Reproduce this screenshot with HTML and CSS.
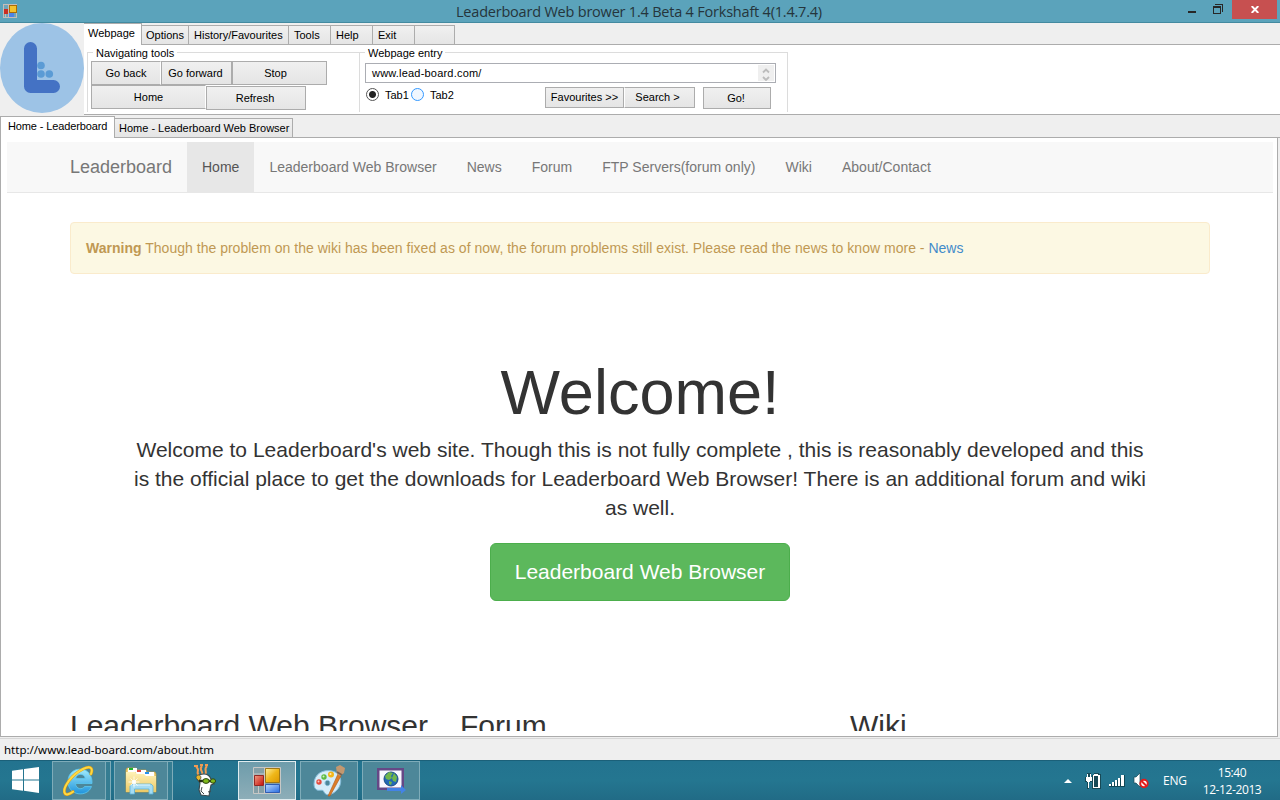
FILE: index.html
```html
<!DOCTYPE html>
<html lang="en">
<head>
<meta charset="utf-8">
<title>Leaderboard Web brower</title>
<link rel="stylesheet" href="styles.css">
</head>
<body>
<div class="desktop">
  <header class="titlebar">
    <svg class="app-icon" width="14" height="14" viewBox="0 0 14 14" shape-rendering="crispEdges"><path d="M.5.5h13v13H.5zM.5 5h5M5.5 0v14M5 8.500h9M2.500 10v4" fill="#6fa5b8" stroke="#c5bdb8"/><rect x="6" y="1" width="7" height="7" fill="#f3c22d" stroke="#a96d08"/><rect x="1" y="5" width="4" height="5" fill="#c92d22"/><rect x="6" y="9" width="5" height="4" fill="#4d83e8"/></svg>
    <span class="title"><span>Leaderboard Web brower 1.4 Beta 4 Forkshaft 4(1.4.7.4)</span></span>
    <div class="controls">
      <svg width="8" height="2"><path d="M0 0h8v2H0z" fill="#272727"/></svg>
      <svg width="10" height="10" shape-rendering="crispEdges"><path d="M2 0h8v8H9V1H2zM0 2h8v8H0zM1 4v5h6V4z" fill="#272727" fill-rule="evenodd"/></svg>
      <span class="close"><svg width="8" height="7" viewBox="0 0 8 7"><path d="M.7 0l6.600 7M7.300 0L.7 7" stroke="#fff" stroke-width="1.900"/></svg></span>
    </div>
  </header>

  <section class="tools">
    <svg class="logo" width="84" height="91" viewBox="0 0 84 91"><ellipse cx="42" cy="45" rx="42" ry="45" fill="#9dc3e6"/><path d="M30.500 25.500v38H53.500" fill="none" stroke="#4472c4" stroke-width="13" stroke-linecap="round" stroke-linejoin="round"/><g fill="#5b9bd5"><circle cx="41" cy="42.500" r="3.800"/><circle cx="41" cy="51" r="3.800"/><circle cx="49.300" cy="51" r="3.800"/></g></svg>
    <div class="tool-area">
      <nav class="menu-tabs">
        <span class="mtab on w57">Webpage</span><span class="mtab w48">Options</span><span class="mtab w100">History/Favourites</span><span class="mtab w42">Tools</span><span class="mtab w42">Help</span><span class="mtab w42">Exit</span><span class="mtab w40"></span>
      </nav>
      <div class="panel">
        <div class="group nav-group">
          <span class="legend">Navigating tools</span>
          <div class="row"><button class="b70">Go back</button><button class="b71">Go forward</button><button class="b95">Stop</button></div>
          <div class="row"><button class="b115">Home</button><button class="b100">Refresh</button></div>
        </div>
        <div class="group entry-group">
          <span class="legend">Webpage entry</span>
          <div class="entry"><span class="url">www.lead-board.com/</span><svg class="spin" width="16" height="16" viewBox="0 0 16 16"><path d="M0 0h16v16H0z" fill="#efefef"/><path d="M5 7.500l3-3 3 3M5 12l3 3 3-3" fill="none" stroke="#bcbcbc" stroke-width="1.800"/></svg></div>
          <div class="actions">
            <span class="radio checked"></span><span class="rlabel first">Tab1</span><span class="radio blue"></span><span class="rlabel">Tab2</span>
            <button class="fav">Favourites &gt;&gt;</button><button class="search">Search &gt;</button><button class="go">Go!</button>
          </div>
        </div>
      </div>
    </div>
  </section>

  <nav class="page-tabs"><span class="ptab on">Home - Leaderboard</span><span class="ptab">Home - Leaderboard Web Browser</span></nav>

  <main class="frame">
    <div class="viewport">
      <nav class="site-nav">
        <span class="brand">Leaderboard</span><span class="item active">Home</span><span class="item">Leaderboard Web Browser</span><span class="item">News</span><span class="item">Forum</span><span class="item">FTP Servers(forum only)</span><span class="item">Wiki</span><span class="item">About/Contact</span>
      </nav>
      <div class="container">
        <div class="alert"><b>Warning</b> Though the problem on the wiki has been fixed as of now, the forum problems still exist. Please read the news to know more - <span class="link">News</span></div>
        <section class="hero">
          <h1>Welcome!</h1>
          <p>Welcome to Leaderboard's web site. Though this is not fully complete , this is reasonably developed and this<br>is the official place to get the downloads for Leaderboard Web Browser! There is an additional forum and wiki<br>as well.</p>
          <span class="cta">Leaderboard Web Browser</span>
        </section>
        <section class="columns"><h2>Leaderboard Web Browser</h2><h2>Forum</h2><h2>Wiki</h2></section>
      </div>
    </div>
  </main>

  <div class="status"><span>http://www.lead-board.com/about.htm</span></div>

  <footer class="taskbar">
    <span class="start"><svg width="27" height="26" viewBox="0 0 27 26"><path d="M0 3.700l11-1.500V12.400H0zM12 2l15-2v12.400H12zM0 13.400h11v10.300L0 22.200zM12 13.400h15V26l-15-2.200z" fill="#fff"/></svg></span>
    <span class="task ie stack"><svg width="32" height="32" viewBox="0 0 32 32"><defs><linearGradient id="b" x2="0" y2="1"><stop stop-color="#a2ecfc"/><stop offset="1" stop-color="#1f93dc"/></linearGradient></defs><path d="M29 18.500H12.500c.5 6 7 6.500 9 3H28.500C24.500 33 4.500 31 5 16 5.500 0 30-.5 29 18.500zM12.700 13.500h9.500c-.5-5.500-8.800-5.500-9.500 0z" fill="url(#b)" fill-rule="evenodd" stroke="#5cc8f0" stroke-width=".8"/><path d="M28 9C30.500 2.500 27 .5 20 4 8 10 0 22.500 1.500 27.500c1 3.500 5.500 1.500 8.500-.8" fill="none" stroke="#d99a12" stroke-width="3" stroke-linecap="round"/><path d="M28 9C30.500 2.500 27 .5 20 4 8 10 0 22.500 1.500 27.500c1 3.500 5.500 1.500 8.500-.8" fill="none" stroke="#fdd943" stroke-width="2" stroke-linecap="round"/></svg></span>
    <span class="task explorer stack"><svg width="32" height="32" viewBox="0 0 32 32"><defs><linearGradient id="y" x2="0" y2="1"><stop stop-color="#fff2b8"/><stop offset="1" stop-color="#ecc965"/></linearGradient></defs><path d="M1 5l1-2h9l1 2h9l1 2h8l1 2v18H1z" fill="#eecf77" stroke="#c99d3a" stroke-width=".7"/><path d="M3 3h9v4H3zM11 5h10v4H11zM19 7h10v4H19z" fill="#fff"/><path d="M4 3h4v2H4z" fill="#20b529"/><path d="M12 5h4v2h-4z" fill="#dc483d"/><path d="M20 7h4v2h-4z" fill="#2592ed"/><path d="M1 7h9l2 2h7l2 2h10v16H1z" fill="url(#y)"/><path d="M5 29V21l2-2h19l2 2v8h-4v-5H9.500v5z" fill="#a6dcf3" stroke="#5ab2dc" stroke-width=".8"/><path d="M8 20h17" stroke="#e2f6ff"/><path d="M9 11.500v11M3.500 17h11M5.500 13.500l7 7M12.500 13.500l-7 7" stroke="#fff" stroke-width=".8"/><circle cx="9" cy="17" r="2" fill="#fff"/></svg></span>
    <span class="mascot"><svg width="24" height="33" viewBox="0 0 24 33"><path d="M1 2h4M7 1h3M12 1h3M3 3c5 3-1 5 3 8M9 2c-4 4 2 5 0 9M14 2c-4 4 1 5-2 9" fill="none" stroke="#f19b52" stroke-width="2"/><path d="M6 11c5-2 10-1 12 4l3 5-3 1-1 5-1 6-8-1-2-5 1-7-3-4z" fill="#fff" stroke="#39474c" stroke-width="1.100"/><path d="M3 14c0-4 5-4 5 0l-2 3z" fill="#e7b52c" stroke="#484832" stroke-width=".7"/><path d="M6 17h16" stroke="#263018" stroke-width="2.500"/><ellipse cx="13" cy="17" rx="3.200" ry="2.400" fill="#80b91b" stroke="#304716"/><ellipse cx="20" cy="17" rx="2.600" ry="2.200" fill="#80b91b" stroke="#304716"/><path d="M9 23l-1 4 3 3M15 28l3-1" fill="none" stroke="#42494b"/></svg></span>
    <span class="task current"><svg width="28" height="28" viewBox="0 0 28 28"><path d="M.5.500h27v26H.5zM0 7h12M11.500 0v27M0 18.500h28M5.500 19v8" fill="#849fa7" stroke="#c7c8c6"/><defs><linearGradient id="g" x2="1" y2="1"><stop stop-color="#fff0a1"/><stop offset=".5" stop-color="#efb719"/><stop offset="1" stop-color="#dc9700"/></linearGradient><linearGradient id="r" x2="1" y2="1"><stop stop-color="#ef9d83"/><stop offset="1" stop-color="#c60d08"/></linearGradient><linearGradient id="u" x2="1" y2="1"><stop stop-color="#b8d8ff"/><stop offset="1" stop-color="#286ce0"/></linearGradient></defs><path d="M12.500 1.500h14v14h-14z" fill="url(#g)" stroke="#9f7816"/><path d="M1.500 8.500h9v10h-9z" fill="url(#r)" stroke="#942724"/><path d="M12.500 17.500h14v8h-14z" fill="url(#u)" stroke="#305cb0"/></svg></span>
    <span class="task"><svg width="32" height="32" viewBox="0 0 32 32"><path d="M1 19C1 9 10 4 19 6c10 2 11 13 5 19-6 6-11 6-13 2-1-3-4-1-7-2-2-1-3-3-3-6zm11-1c0 3.500 5 3.500 5 0s-5-3.500-5 0z" fill="#d6edf9" fill-rule="evenodd" stroke="#85bddb"/><circle cx="6" cy="17" r="2.700" fill="#e54b3d"/><circle cx="11" cy="12" r="2.700" fill="#5ebc43"/><circle cx="18" cy="9.500" r="3" fill="#f3b619"/><g fill="#fff" opacity=".7"><circle cx="5.500" cy="16.500" r="1"/><circle cx="10.500" cy="11.500" r="1"/><circle cx="17.500" cy="9" r="1"/></g><path d="M25 9l3 2-11 20h-2z" fill="#dc7d29" stroke="#af591b" stroke-width=".6"/><path d="M24 9l-1-7 4-2 5 3-1 5-4 3z" fill="#c39870"/><path d="M24 7l5 3" stroke="#776354" stroke-width="2"/></svg></span>
    <span class="task"><svg width="32" height="32" viewBox="0 0 32 32"><path d="M2 3h27v22H2z" fill="#654886"/><path d="M4.500 5.500h22v17h-22z" fill="#f8f8ff"/><circle cx="16" cy="14" r="7" fill="#2368b5" stroke="#184b82"/><path d="M10 11l4-4 4 1-2 3 1 2-3 2-3-1zM19 8l3 4-1 5-3-1-1-3zM14 16l3 1-1 3-2-1z" fill="#70b64c"/><path d="M12 23h14v-3l5 5-5 4v-3H12z" fill="#4383e6"/></svg></span>
    <div class="tray">
      <svg class="arrow" width="8" height="4"><path d="M0 4l4-4 4 4z" fill="#fff"/></svg>
      <svg class="power" width="16" height="16" viewBox="0 0 16 16" shape-rendering="crispEdges"><path d="M0 4h2V0h4v4h1V2h2V0h5v1h2v15H7V9H4v7H2V9H0z" fill="#174956"/><path d="M2 1h1v3h2V1h1v3h1v4H5v1H4v6H3V9H2V8H1V4h1zM9 1h4v1h2v13H8V2h1zM9 3v11h4V3z" fill="#fff" fill-rule="evenodd"/></svg>
      <svg class="signal" width="16" height="12" viewBox="0 0 16 12" shape-rendering="crispEdges"><path d="M0 9h3v3H0zM3 7h3v5H3zM6 5h3v7H6zM9 3h3v9H9zM12 0h4v12h-4z" fill="#124754"/><path d="M0 9h2v2H0zM3 7h2v4H3zM6 5h2v6H6zM9 3h2v8H9zM12 0h3v11h-3z" fill="#fff"/></svg>
      <svg class="sound" width="16" height="16" viewBox="0 0 16 16"><path d="M1 4h2l4-4v14l-4-4H1z" fill="#fff" stroke="#174956" stroke-width=".7"/><circle cx="11" cy="10.500" r="3.700" fill="#fff" stroke="#e21c1c" stroke-width="1.900"/><path d="M8.500 8l5 5" stroke="#e21c1c" stroke-width="1.900"/></svg>
      <span class="lang">ENG</span>
      <span class="clock"><span>15:40</span><span class="date">12-12-2013</span></span>
    </div>
  </footer>
</div>
</body>
</html>
```
FILE: styles.css
```css
* { box-sizing: border-box; }
body { margin: 0; }
.desktop { width: 1280px; height: 800px; overflow: hidden; display: flex; flex-direction: column; background: #efefef; color: #000; font: 11px/13px "Liberation Sans", Arial, sans-serif; white-space: nowrap; }
svg { display: block; flex: none; }

.titlebar { height: 23px; flex: none; display: flex; background: #5ba3bb; border-bottom: 1px solid #438aa0; }
.app-icon { margin: 4px 0 0 3px; }
.title { flex: 1; padding-left: 439px; font: 14.500px/23px "Open Sans", sans-serif; color: #25353c; letter-spacing: -.21px; }
.controls { display: flex; }
.controls > svg:first-child { margin: 11px 17px 0 0; }
.controls > svg:nth-child(2) { margin: 4px 9px 0 0; }
.close { width: 45px; height: 19px; margin-right: 3px; background: #c75050; display: flex; justify-content: center; padding-top: 6px; }

.tools { height: 92px; flex: none; display: flex; }
.tool-area { flex: 1; display: flex; flex-direction: column; }
.menu-tabs { height: 22px; display: flex; align-items: flex-end; border-bottom: 1px solid #acacac; }
.mtab { height: 19px; padding: 3px 0 0 5px; background: linear-gradient(#f0f0f0, #e5e5e5); border: 1px solid #acacac; border-bottom: 0; border-left: 0; }
.mtab.on { height: 22px; margin-bottom: -1px; background: #fff; padding: 3px 0 0 4px; }
.w57 { width: 58px; } .w48 { width: 47px; } .w100 { width: 100px; } .w42 { width: 42px; } .w40 { width: 40px; }
.mtab.w48 { padding-left: 4px; }
.panel { flex: 1; display: flex; background: #fff; padding: 7px 0 0 3px; border-bottom: 1px solid #acacac; }
.group { height: 60px; border: 1px solid #dcdcdc; border-bottom: 0; }
.nav-group { width: 272px; padding: 0 0 0 3px; border-right: 0; }
.entry-group { width: 429px; padding-left: 5px; }
.legend { display: block; width: max-content; height: 13px; margin: -6px 0 1px 2px; padding: 0 3px; background: #fff; }
.entry-group .legend { margin-left: 0; margin-bottom: 3px; }
.row { height: 24px; display: flex; }
.row + .row button:nth-child(2) { margin-top: 1px; }
button { height: 24px; margin: 0; padding: 0; border: 1px solid #acacac; border-radius: 0; background: linear-gradient(#f0f0f0, #e5e5e5); font: inherit; color: #000; }
.b70 { width: 70px; border-right-color: #fff; } .b71 { width: 71px; padding-right: 2px; } .b95 { width: 95px; padding-right: 8px; } .b115 { width: 115px; border-right-color: #fff; } .b100 { width: 100px; padding-right: 2px; }
.entry { width: 411px; height: 20px; border: 1px solid #abadb3; display: flex; padding: 1px 1px 0 6px; justify-content: space-between; }
.url { padding-top: 2px; letter-spacing: .2px; }
.actions { height: 30px; display: flex; align-items: flex-start; }
.radio { width: 13px; height: 13px; margin: 5px 0 0 1px; border: 1px solid #555; border-radius: 50%; background: #fff; }
.checked { background: radial-gradient(circle, #222 0 3px, #fff 4px); }
.radio.blue { border-color: #3399ff; background: #f0f7ff; }
.rlabel { width: 42px; padding: 6px 0 0 6px; }
.rlabel.first { width: 31px; }
.fav { width: 79px; height: 21px; margin: 4px 0 0 79px; }
.search { width: 71px; height: 21px; margin-top: 4px; border-left-color: #fff; padding-right: 4px; }
.go { width: 68px; height: 22px; margin: 4px 0 0 8px; padding-right: 2px; }

.page-tabs { height: 23px; flex: none; display: flex; align-items: flex-end; border-bottom: 1px solid #acacac; }
.ptab { width: 178px; height: 19px; padding: 3px 0 0 4px; border: 1px solid #acacac; border-bottom: 0; border-left: 0; background: linear-gradient(#f0f0f0, #e5e5e5); }
.ptab.on { width: 115px; height: 22px; margin-bottom: -1px; background: #fff; border-left: 1px solid #acacac; padding: 3px 0 0 7px; letter-spacing: -.12px; }

.frame { width: 1278px; height: 599px; flex: none; background: #fff; border: 1px solid #acacac; border-top: 0; padding: 4px 4px 5px 6px; }
.viewport { height: 589px; overflow: hidden; color: #333; font-size: 14px; line-height: 20px; }
.site-nav { height: 51px; display: flex; background: #f8f8f8; border-bottom: 1px solid #e7e7e7; padding-left: 63px; color: #777; letter-spacing: .01px; }
.brand { width: 117px; font-size: 18px; padding-top: 15px; letter-spacing: 0; }
.item { padding: 15px; }
.item.active { background: #e7e7e7; color: #555; }
.container { width: 1140px; margin: 29px 0 0 63px; }
.alert { height: 52px; padding: 15px; border: 1px solid #faebcc; border-radius: 4px; background: #fcf8e3; color: #c09853; letter-spacing: .015px; }
.link { color: #428bca; }
.hero { height: 435px; padding-top: 87px; text-align: center; font-size: 21px; }
h1 { margin: 0 0 11px; font-size: 63px; line-height: 63px; font-weight: 400; }
.hero p { margin: 0 0 21px; line-height: 29px; letter-spacing: .01px; }
.cta { display: inline-block; width: 300px; height: 58px; background: #5cb85c; border: 1px solid #4cae4c; border-radius: 6px; color: #fff; line-height: 55px; }
.columns { display: grid; grid-template-columns: 390px 390px 1fr; }
h2 { margin: 0; font-weight: 400; font-size: 30px; line-height: 33px; }

.status { height: 22px; flex: none; margin-top: 1px; border-top: 1px solid #d7d7d7; padding: 4px 0 0 4px; font: 11.500px/14px "Noto Sans", sans-serif; }

.taskbar { height: 40px; flex: none; display: flex; background: linear-gradient(#23738f, #247690 50%, #216b86); border-top: 1px solid #1b6079; color: #fff; }
.start { width: 52px; padding: 6px 0 0 12px; }
.task { position: relative; width: 58px; height: 39px; margin: 0 2px; display: flex; align-items: center; justify-content: center; border: 1px solid #7eacb9; background: #4d8799; }
.stack { width: 54px; margin: 0 8px 0 0; }
.stack::after { content: ""; position: absolute; left: 53px; top: -1px; width: 4px; height: 39px; border: 1px solid #7eacb9; border-left: 0; background: #367d92; }
.mascot { width: 60px; padding: 3px 0 0 17px; }
.current { background: linear-gradient(#6e9cab, #8daeb8); border-color: #e0ecef; }
.tray { flex: 1; display: flex; justify-content: flex-end; font: 12px/16px "Open Sans", sans-serif; }
.arrow { margin: 18px 13px 0 0; }
.power { margin: 12px 8px 0 0; }
.signal { margin: 14px 8px 0 0; }
.sound { margin: 12px 14px 0 0; }
.lang { width: 37px; padding-top: 12px; letter-spacing: -.25px; }
.clock { width: 64px; margin-right: 16px; padding-top: 4px; display: flex; flex-direction: column; gap: 1px; text-align: center; letter-spacing: -.4px; }
```
